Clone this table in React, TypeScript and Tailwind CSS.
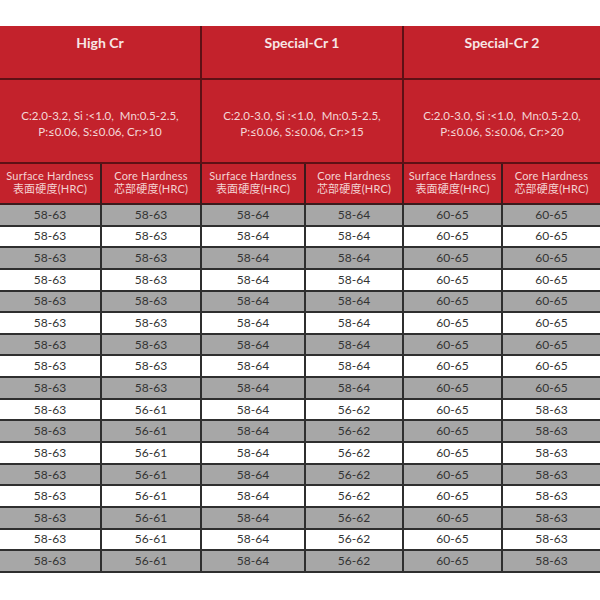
import React from "react";

const groups = [
  { title: "High Cr", l1: "C:2.0-3.2, Si :<1.0,  Mn:0.5-2.5,", l2: "P:≤0.06, S:≤0.06, Cr:>10" },
  { title: "Special-Cr 1", l1: "C:2.0-3.0, Si :<1.0,  Mn:0.5-2.5,", l2: "P:≤0.06, S:≤0.06, Cr:>15" },
  { title: "Special-Cr 2", l1: "C:2.0-3.0, Si :<1.0,  Mn:0.5-2.0,", l2: "P:≤0.06, S:≤0.06, Cr:>20" },
];

const rows: string[][] = Array.from({ length: 17 }, (_, i) =>
  i < 9
    ? ["58-63", "58-63", "58-64", "58-64", "60-65", "60-65"]
    : ["58-63", "56-61", "58-64", "56-62", "60-65", "58-63"]
);

const font = { fontFamily: "Lato, 'Noto Sans CJK SC', sans-serif" };

export default function App() {
  return (
    <div className="w-[600px] h-[600px] bg-white pt-[26px]" style={font}>
      <div className="grid grid-cols-[102px_100px_104px_98px_99px_97px]">
        {groups.map((g, i) => (
          <div
            key={"t" + i}
            className={`col-span-2 h-[54px] bg-[#c3222c] border-b-2 border-[#5e1015] ${i < 2 ? "border-r-2" : ""} flex justify-center pt-[6px] text-[14px] font-bold text-[#f7e6e6]`}
          >
            {g.title}
          </div>
        ))}
        {groups.map((g, i) => (
          <div
            key={"c" + i}
            className={`col-span-2 h-[84px] bg-[#c3222c] border-b-2 border-[#5e1015] ${i < 2 ? "border-r-2" : ""} flex flex-col items-center justify-center pt-[5px] text-[11.5px] leading-[16px] text-[#f3d8d8] whitespace-pre`}
          >
            <span>{g.l1}</span>
            <span>{g.l2}</span>
          </div>
        ))}
        {[0, 1, 2, 3, 4, 5].map((c) => (
          <div
            key={"h" + c}
            className={`h-[41px] bg-[#c3222c] border-b-2 border-[#3a1a1c] ${c < 5 ? "border-r-2" : ""} flex flex-col items-center justify-center pb-[4px] text-[11px] leading-[13px] tracking-[0.2px] text-[#f3d2d2]`}
          >
            <span>{c % 2 === 0 ? "Surface Hardness" : "Core Hardness"}</span>
            <span>{c % 2 === 0 ? "表面硬度(HRC)" : "芯部硬度(HRC)"}</span>
          </div>
        ))}
        {rows.map((r, ri) =>
          r.map((v, c) => (
            <div
              key={ri + "-" + c}
              className={`h-[21.65px] ${ri % 2 === 0 ? "bg-[#a7a7a7]" : "bg-white"} border-b-2 border-[#2f2f2f] ${c < 5 ? "border-r-2" : ""} flex items-center justify-center text-[12px] text-[#333333]`}
            >
              {v}
            </div>
          ))
        )}
      </div>
    </div>
  );
}
